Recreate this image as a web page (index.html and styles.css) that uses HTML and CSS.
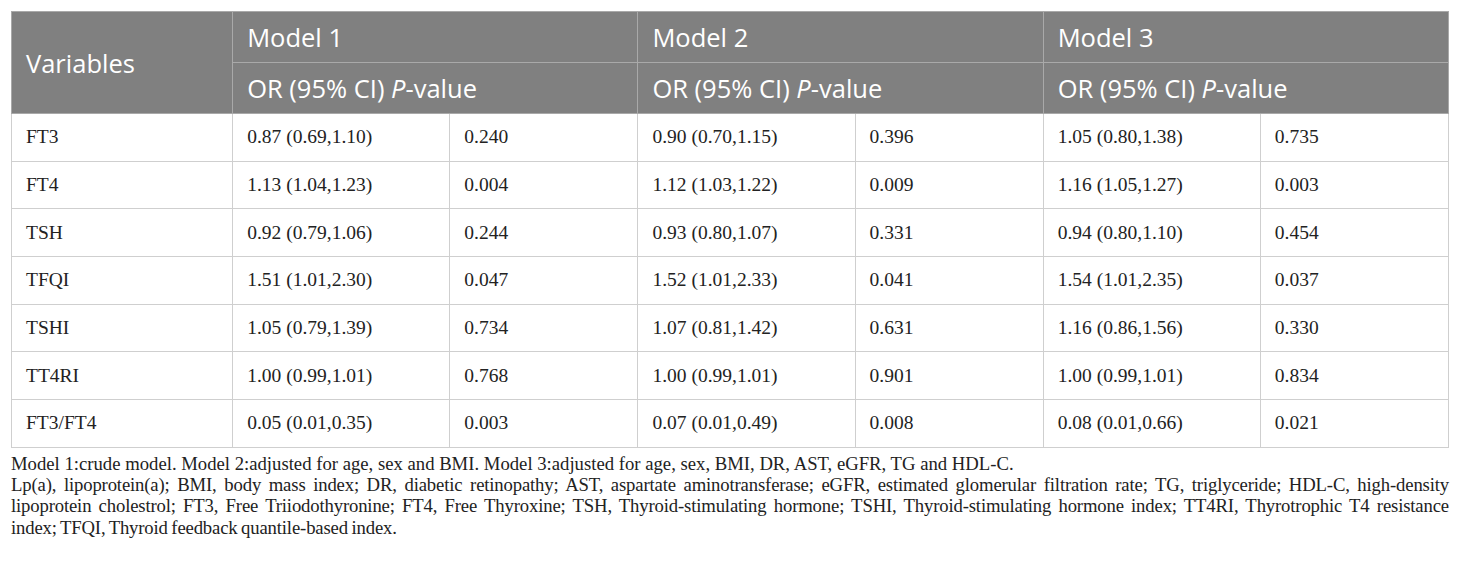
FILE: index.html
```html
<!DOCTYPE html>
<html lang="en">
<head>
<meta charset="UTF-8">
<title>Table: thyroid indices and OR</title>
<link rel="stylesheet" href="styles.css">
</head>
<body>
<div class="wrap">
<table class="results">
	<colgroup>
		<col class="c-var">
		<col class="c-or"><col class="c-p">
		<col class="c-or"><col class="c-p">
		<col class="c-or"><col class="c-p">
	</colgroup>
	<thead>
		<tr>
			<th rowspan="2">Variables</th>
			<th colspan="2">Model 1</th>
			<th colspan="2">Model 2</th>
			<th colspan="2">Model 3</th>
		</tr>
		<tr>
			<th colspan="2">OR (95% CI) <i>P</i>-value</th>
			<th colspan="2">OR (95% CI) <i>P</i>-value</th>
			<th colspan="2">OR (95% CI) <i>P</i>-value</th>
		</tr>
	</thead>
	<tbody>
		<tr><td>FT3</td><td>0.87 (0.69,1.10)</td><td>0.240</td><td>0.90 (0.70,1.15)</td><td>0.396</td><td>1.05 (0.80,1.38)</td><td>0.735</td></tr>
		<tr><td>FT4</td><td>1.13 (1.04,1.23)</td><td>0.004</td><td>1.12 (1.03,1.22)</td><td>0.009</td><td>1.16 (1.05,1.27)</td><td>0.003</td></tr>
		<tr><td>TSH</td><td>0.92 (0.79,1.06)</td><td>0.244</td><td>0.93 (0.80,1.07)</td><td>0.331</td><td>0.94 (0.80,1.10)</td><td>0.454</td></tr>
		<tr><td>TFQI</td><td>1.51 (1.01,2.30)</td><td>0.047</td><td>1.52 (1.01,2.33)</td><td>0.041</td><td>1.54 (1.01,2.35)</td><td>0.037</td></tr>
		<tr><td>TSHI</td><td>1.05 (0.79,1.39)</td><td>0.734</td><td>1.07 (0.81,1.42)</td><td>0.631</td><td>1.16 (0.86,1.56)</td><td>0.330</td></tr>
		<tr><td>TT4RI</td><td>1.00 (0.99,1.01)</td><td>0.768</td><td>1.00 (0.99,1.01)</td><td>0.901</td><td>1.00 (0.99,1.01)</td><td>0.834</td></tr>
		<tr><td>FT3/FT4</td><td>0.05 (0.01,0.35)</td><td>0.003</td><td>0.07 (0.01,0.49)</td><td>0.008</td><td>0.08 (0.01,0.66)</td><td>0.021</td></tr>
	</tbody>
</table>
<div class="notes">
	<p>Model 1:crude model. Model 2:adjusted for age, sex and BMI. Model 3:adjusted for age, sex, BMI, DR, AST, eGFR, TG and HDL-C.</p>
	<p>
		<span class="line full">Lp(a), lipoprotein(a); BMI, body mass index; DR, diabetic retinopathy; AST, aspartate aminotransferase; eGFR, estimated glomerular filtration rate; TG, triglyceride; HDL-C, high-density</span>
		<span class="line full">lipoprotein cholestrol; FT3, Free Triiodothyronine; FT4, Free Thyroxine; TSH, Thyroid-stimulating hormone; TSHI, Thyroid-stimulating hormone index; TT4RI, Thyrotrophic T4 resistance</span>
		<span class="line">index; TFQI, Thyroid feedback quantile-based index.</span>
	</p>
</div>
</div>
</body>
</html>
```

FILE: styles.css
```css
html {
	background-color: #FFFFFF;
}
body {
	margin: 0;
	color: #222222;
	font-family: "Liberation Serif", "Times New Roman", serif;
}
.wrap {
	padding: 11px 11px 0 11px;
}
.results {
	width: 1438px;
	border-collapse: collapse;
	table-layout: fixed;
}
.c-var {
	width: 221px;
}
.c-or {
	width: 217px;
}
.c-p {
	width: 188px;
}
.results th {
	background: #808080;
	color: #FFFFFF;
	font-family: "Open Sans", "Noto Sans", sans-serif;
	font-weight: normal;
	font-size: 25.5px;
	text-align: left;
	height: 50px;
	padding: 0 14px;
	border: 1px solid #A9A9A9;
	line-height: 30px;
}
.results th i {
	font-style: italic;
}
.results td {
	height: 46.7px;
	padding: 0 14px;
	border: 1px solid #CFCFCF;
	font-size: 19.5px;
	color: #222222;
	vertical-align: middle;
}
.notes {
	width: 1438px;
	margin-top: 5px;
	font-size: 18.7px;
	line-height: 21.3px;
	color: #222222;
}
.notes p {
	margin: 0;
}
.notes .line {
	display: block;
	white-space: nowrap;
	letter-spacing: -0.15px;
	word-spacing: -1px;
}
.notes .full {
	text-align: justify;
	text-align-last: justify;
}
```
